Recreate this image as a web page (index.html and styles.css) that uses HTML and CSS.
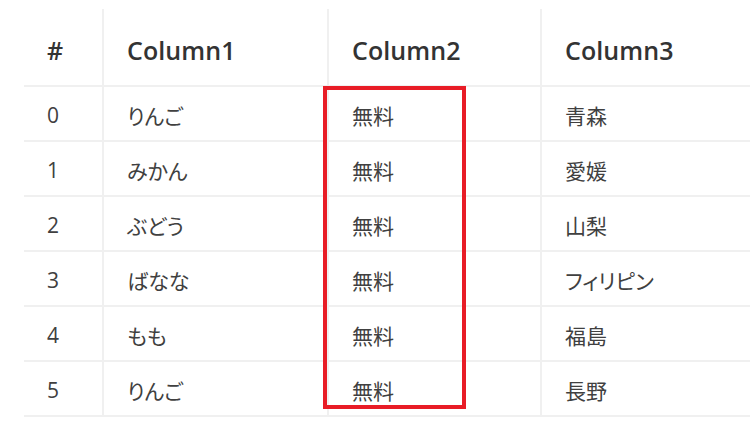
FILE: index.html
```html
<!DOCTYPE html>
<html lang="ja">
<head>
<meta charset="utf-8">
<link rel="stylesheet" href="styles.css">
</head>
<body>
<div class="wrap">
<table class="grid">
  <colgroup>
    <col class="c0"><col class="c1"><col class="c2"><col class="c3">
  </colgroup>
  <thead>
    <tr><th>#</th><th>Column1</th><th>Column2</th><th>Column3</th></tr>
  </thead>
  <tbody>
    <tr><td>0</td><td>りんご</td><td>無料</td><td>青森</td></tr>
    <tr><td>1</td><td>みかん</td><td>無料</td><td>愛媛</td></tr>
    <tr><td>2</td><td>ぶどう</td><td>無料</td><td>山梨</td></tr>
    <tr><td>3</td><td>ばなな</td><td>無料</td><td>フィリピン</td></tr>
    <tr><td>4</td><td>もも</td><td>無料</td><td>福島</td></tr>
    <tr><td>5</td><td>りんご</td><td>無料</td><td>長野</td></tr>
  </tbody>
</table>
<div class="highlight"></div>
</div>
</body>
</html>
```

FILE: styles.css
```css
html, body {
  margin: 0;
  padding: 0;
  background: #ffffff;
  overflow: hidden;
}
body {
  width: 750px;
  height: 425px;
  font-family: "Open Sans", "Noto Sans CJK JP", sans-serif;
  color: #333333;
}
.wrap {
  position: relative;
  padding: 9px 0 0 24px;
}
.grid {
  border-collapse: collapse;
  table-layout: fixed;
  width: 760px;
}
.c0 { width: 79px; }
.c1 { width: 225px; }
.c2 { width: 213px; }
.c3 { width: 243px; }
.grid th, .grid td {
  text-align: left;
  padding: 0 0 0 23px;
  border-left: 2px solid #f0f0f0;
  border-bottom: 2px solid #f0f0f0;
  box-sizing: border-box;
  white-space: nowrap;
}
.grid th:first-child, .grid td:first-child {
  border-left: none;
  padding-left: 23px;
}
.grid th {
  height: 77px;
  font-size: 25px;
  font-weight: 600;
  color: #333333;
  padding-top: 5px;
  letter-spacing: 0.1px;
}
.grid td {
  height: 55px;
  font-size: 21px;
  font-weight: 400;
  color: #404040;
  padding-top: 2px;
  font-feature-settings: "palt";
}
.highlight {
  position: absolute;
  left: 323px;
  top: 86px;
  width: 143px;
  height: 323px;
  box-sizing: border-box;
  border: 4px solid #e81c26;
}
```
